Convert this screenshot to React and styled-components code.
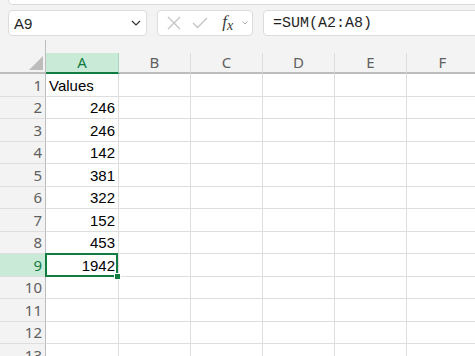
import styled, { createGlobalStyle } from "styled-components";

const GlobalStyle = createGlobalStyle`
  html, body {
    margin: 0;
    padding: 0;
    background: #f3f3f3;
    overflow: hidden;
  }
  #root {
    width: 475px;
    height: 356px;
    overflow: hidden;
  }
`;

const columns = ["A", "B", "C", "D", "E", "F"];
const values = ["Values", 246, 246, 142, 381, 322, 152, 453, 1942];
const selectedRow = 9;

const App = () => {
  const rows = Array.from({ length: 13 }, (_, i) => i + 1);

  return (
    <>
      <GlobalStyle />
      <Page>
        <TopStrip />
        <Toolbar>
          <NameBox>
            <NameText>A9</NameText>
            <svg width="10" height="6" viewBox="0 0 10 6">
              <polyline points="1,1 5,5 9,1" fill="none" stroke="#333" strokeWidth="1.2" />
            </svg>
          </NameBox>
          <FxBox>
            <svg width="14" height="14" viewBox="0 0 14 14">
              <path d="M1 1 L13 13 M13 1 L1 13" stroke="#c4c4c4" strokeWidth="1.3" fill="none" />
            </svg>
            <svg width="16" height="12" viewBox="0 0 16 12">
              <polyline points="1,6 5.5,10.5 15,1" fill="none" stroke="#c4c4c4" strokeWidth="1.3" />
            </svg>
            <FxLabel>
              f<sub>x</sub>
            </FxLabel>
            <svg width="6" height="4" viewBox="0 0 6 4">
              <polyline points="0.5,0.5 3,3 5.5,0.5" fill="none" stroke="#b0b0b0" strokeWidth="1" />
            </svg>
          </FxBox>
          <FormulaBox>=SUM(A2:A8)</FormulaBox>
        </Toolbar>

        <Sheet>
          <HeaderRow>
            <Corner>
              <svg width="14" height="14" viewBox="0 0 14 14">
                <polygon points="14,0 14,14 0,14" fill="#bdbdbd" />
              </svg>
            </Corner>
            {columns.map((c, i) => (
              <ColHeader key={c} $active={c === "A"} $wide={i === 0}>
                {c}
              </ColHeader>
            ))}
          </HeaderRow>

          {rows.map((r) => (
            <Row key={r}>
              <RowHeader $active={r === selectedRow}>{r}</RowHeader>
              {columns.map((c, i) => {
                const v = c === "A" ? values[r - 1] : undefined;
                const selected = c === "A" && r === selectedRow;
                return (
                  <Cell
                    key={c}
                    $wide={i === 0}
                    $number={typeof v === "number"}
                    $selected={selected}
                  >
                    {v}
                    {selected && <FillHandle />}
                  </Cell>
                );
              })}
            </Row>
          ))}
        </Sheet>
      </Page>
    </>
  );
};

export default App;

const Page = styled.div`
  display: flex;
  flex-direction: column;
  width: 475px;
  height: 356px;
  overflow: hidden;
  background: #f3f3f3;

  & > * {
    flex-shrink: 0;
  }
`;

const TopStrip = styled.div`
  box-sizing: border-box;
  height: 5px;
  margin-left: 8px;
  margin-right: -10px;
  background: #fff;
  border: 1px solid #dadada;
  border-top: none;
  border-bottom-left-radius: 5px;
`;

const Toolbar = styled.div`
  display: flex;
  gap: 10px;
  height: 26px;
  margin: 5px -10px 0 8px;
`;

const Box = styled.div`
  box-sizing: border-box;
  height: 26px;
  background: #fff;
  border: 1px solid #dcdcdc;
  border-radius: 4px;
  display: flex;
  align-items: center;
`;

const NameBox = styled(Box)`
  width: 139px;
  padding: 0 5px 0 5px;
  justify-content: space-between;
`;

const NameText = styled.span`
  font: 15px "Liberation Sans", Arial, sans-serif;
  color: #1f1f1f;
`;

const FxBox = styled(Box)`
  width: 96px;
  padding: 0 4px 0 9px;
  justify-content: space-between;

  svg:nth-child(2) {
    margin-left: 2px;
  }
`;

const FxLabel = styled.span`
  font: italic 17px "Liberation Serif", "Times New Roman", serif;
  color: #3a3a3a;
  margin-left: 6px;
  line-height: 1;

  sub {
    font-size: 14px;
    vertical-align: -3px;
  }
`;

const FormulaBox = styled(Box)`
  flex: 1;
  padding-left: 9px;
  font: 15px "Liberation Mono", "Courier New", monospace;
  color: #1f1f1f;
  border-top-right-radius: 0;
  border-bottom-right-radius: 0;
`;

const Sheet = styled.div`
  margin-top: 4px;
  display: flex;
  flex-direction: column;
`;

const HeaderRow = styled.div`
  display: flex;
  height: 34px;
  flex: none;
`;

const Corner = styled.div`
  box-sizing: border-box;
  width: 46px;
  flex: none;
  border-right: 1px solid #bdbdbd;
  border-bottom: 2px solid #bdbdbd;
  display: flex;
  align-items: flex-end;
  justify-content: flex-end;
  padding: 0 2px 2px 0;
`;

const ColHeader = styled.div`
  box-sizing: border-box;
  flex: none;
  width: ${(p) => (p.$wide ? "73px" : "72px")};
  height: 21px;
  margin-top: 13px;
  display: flex;
  align-items: center;
  justify-content: center;
  font: 15px "Noto Sans", "Open Sans", sans-serif;
  color: ${(p) => (p.$active ? "#107c41" : "#5f5f5f")};
  background: ${(p) => (p.$active ? "#caead8" : "#f3f3f3")};
  border-right: 1px solid ${(p) => (p.$active ? "#a9d5bd" : "#dedede")};
  border-bottom: 2px solid ${(p) => (p.$active ? "#107c41" : "#bdbdbd")};
  padding-bottom: 1px;
`;

const Row = styled.div`
  display: flex;
  height: 22.5px;
  flex: none;
`;

const RowHeader = styled.div`
  box-sizing: border-box;
  flex: none;
  width: 46px;
  padding-right: 3px;
  display: flex;
  align-items: center;
  justify-content: flex-end;
  font: 15px "Noto Sans", "Open Sans", sans-serif;
  color: ${(p) => (p.$active ? "#107c41" : "#5f5f5f")};
  background: ${(p) => (p.$active ? "#caead8" : "#f3f3f3")};
  border-right: 1px solid #bdbdbd;
  border-bottom: 1px solid #dedede;
`;

const Cell = styled.div`
  position: relative;
  box-sizing: border-box;
  flex: none;
  width: ${(p) => (p.$wide ? "73px" : "72px")};
  background: #fff;
  border-right: 1px solid #dedede;
  border-bottom: 1px solid #dedede;
  padding: 1px 3px 0 3px;
  display: flex;
  align-items: center;
  justify-content: ${(p) => (p.$number ? "flex-end" : "flex-start")};
  font: 15px "Liberation Sans", Arial, sans-serif;
  color: #000;

  ${(p) =>
    p.$selected &&
    `
    &::before {
      content: "";
      position: absolute;
      left: -1px;
      top: -1px;
      right: 0;
      bottom: -1px;
      border: 2px solid #107c41;
      z-index: 1;
    }
  `}
`;

const FillHandle = styled.span`
  position: absolute;
  right: -3px;
  bottom: -4px;
  width: 5px;
  height: 5px;
  background: #107c41;
  border: 1px solid #fff;
  z-index: 2;
`;
